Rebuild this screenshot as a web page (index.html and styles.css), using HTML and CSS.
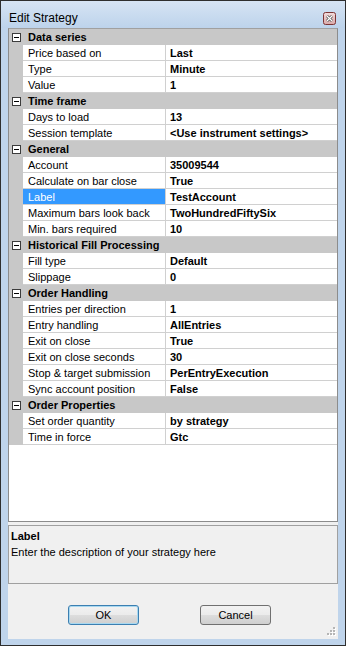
FILE: index.html
```html
<!DOCTYPE html>
<html lang="en">
<head>
    <meta charset="UTF-8">
    <title>Edit Strategy</title>
    <link rel="stylesheet" href="styles.css">
</head>
<body>
    <div class="window">
        <div class="titlebar">
            <span class="title">Edit Strategy</span>
            <svg class="close" width="13" height="13" viewBox="0 0 13 13">
                <defs>
                    <linearGradient id="cg" x1="0" y1="0" x2="0" y2="1">
                        <stop offset="0" stop-color="#f3dcdc"/>
                        <stop offset="1" stop-color="#d9a8a8"/>
                    </linearGradient>
                </defs>
                <rect x="0.5" y="0.5" width="12" height="12" rx="2" fill="url(#cg)" stroke="#7d3434"/>
                <path d="M4 4 L9 9 M9 4 L4 9" stroke="#4a4a4a" stroke-width="2.6"/>
                <path d="M4 4 L9 9 M9 4 L4 9" stroke="#ffffff" stroke-width="1.2"/>
            </svg>
        </div>

        <div class="client">
            <div class="grid">
                <div class="row cat"><span class="margin"><i class="exp"></i></span><span class="cat-name">Data series</span></div>
                <div class="row"><span class="margin"></span><span class="name">Price based on</span><span class="value">Last</span></div>
                <div class="row"><span class="margin"></span><span class="name">Type</span><span class="value">Minute</span></div>
                <div class="row"><span class="margin"></span><span class="name">Value</span><span class="value">1</span></div>

                <div class="row cat"><span class="margin"><i class="exp"></i></span><span class="cat-name">Time frame</span></div>
                <div class="row"><span class="margin"></span><span class="name">Days to load</span><span class="value">13</span></div>
                <div class="row"><span class="margin"></span><span class="name">Session template</span><span class="value">&lt;Use instrument settings&gt;</span></div>

                <div class="row cat"><span class="margin"><i class="exp"></i></span><span class="cat-name">General</span></div>
                <div class="row"><span class="margin"></span><span class="name">Account</span><span class="value">35009544</span></div>
                <div class="row"><span class="margin"></span><span class="name">Calculate on bar close</span><span class="value">True</span></div>
                <div class="row selected"><span class="margin"></span><span class="name">Label</span><span class="value">TestAccount</span></div>
                <div class="row"><span class="margin"></span><span class="name">Maximum bars look back</span><span class="value">TwoHundredFiftySix</span></div>
                <div class="row"><span class="margin"></span><span class="name">Min. bars required</span><span class="value">10</span></div>

                <div class="row cat"><span class="margin"><i class="exp"></i></span><span class="cat-name">Historical Fill Processing</span></div>
                <div class="row"><span class="margin"></span><span class="name">Fill type</span><span class="value">Default</span></div>
                <div class="row"><span class="margin"></span><span class="name">Slippage</span><span class="value">0</span></div>

                <div class="row cat"><span class="margin"><i class="exp"></i></span><span class="cat-name">Order Handling</span></div>
                <div class="row"><span class="margin"></span><span class="name">Entries per direction</span><span class="value">1</span></div>
                <div class="row"><span class="margin"></span><span class="name">Entry handling</span><span class="value">AllEntries</span></div>
                <div class="row"><span class="margin"></span><span class="name">Exit on close</span><span class="value">True</span></div>
                <div class="row"><span class="margin"></span><span class="name">Exit on close seconds</span><span class="value">30</span></div>
                <div class="row"><span class="margin"></span><span class="name">Stop &amp; target submission</span><span class="value">PerEntryExecution</span></div>
                <div class="row"><span class="margin"></span><span class="name">Sync account position</span><span class="value">False</span></div>

                <div class="row cat"><span class="margin"><i class="exp"></i></span><span class="cat-name">Order Properties</span></div>
                <div class="row"><span class="margin"></span><span class="name">Set order quantity</span><span class="value">by strategy</span></div>
                <div class="row"><span class="margin"></span><span class="name">Time in force</span><span class="value">Gtc</span></div>
            </div>

            <div class="help">
                <div class="help-title">Label</div>
                <div class="help-text">Enter the description of your strategy here</div>
            </div>

            <div class="buttons">
                <button class="btn default">OK</button>
                <button class="btn">Cancel</button>
            </div>

            <svg class="grip" width="12" height="12" viewBox="0 0 12 12">
                <g fill="#ffffff">
                    <rect x="10" y="3" width="2" height="2"/>
                    <rect x="7" y="6" width="2" height="2"/><rect x="10" y="6" width="2" height="2"/>
                    <rect x="4" y="9" width="2" height="2"/><rect x="7" y="9" width="2" height="2"/><rect x="10" y="9" width="2" height="2"/>
                </g>
                <g fill="#b5b5b5">
                    <rect x="9" y="2" width="2" height="2"/>
                    <rect x="6" y="5" width="2" height="2"/><rect x="9" y="5" width="2" height="2"/>
                    <rect x="3" y="8" width="2" height="2"/><rect x="6" y="8" width="2" height="2"/><rect x="9" y="8" width="2" height="2"/>
                </g>
            </svg>
        </div>
    </div>
</body>
</html>
```

FILE: styles.css
```css
:root {
    --frame: #bfd4eb;
    --cat-bg: #c8c8c8;
    --grid-line: #d0d0d0;
    --dialog-bg: #f0f0f0;
}

body {
    margin: 0;
    background: #ffffff;
    font-family: 'Liberation Sans', Arial, sans-serif;
    font-size: 11px;
    color: #000;
}

.window {
    width: 346px;
    height: 646px;
    box-sizing: border-box;
    border: 1px solid #2e2e2e;
    background: var(--frame);
    padding: 0 7px 6px 7px;
    display: flex;
    flex-direction: column;
}

.titlebar {
    height: 27px;
    margin: 0 -7px;
    padding: 0 9px 0 8px;
    background: linear-gradient(#d6e4f4, #bdd3eb);
    display: flex;
    align-items: center;
    justify-content: space-between;
}

.title {
    font-size: 12px;
    padding-top: 7px;
    color: #000;
}

.close {
    display: block;
    margin-top: 7px;
}

.client {
    flex: 1;
    background: var(--dialog-bg);
    display: flex;
    flex-direction: column;
    position: relative;
}

.grid {
    height: 494px;
    box-sizing: border-box;
    border: 1px solid #8c8c8c;
    border-top-color: #a0a0a0;
    background: #ffffff;
}

.row {
    display: grid;
    grid-template-columns: 14px 143px 1fr;
    height: 16px;
    line-height: 14px;
}

.row .margin {
    background: var(--cat-bg);
    position: relative;
}

.row .name {
    padding: 1px 0 0 5px;
    border-right: 1px solid var(--grid-line);
    border-bottom: 1px solid var(--grid-line);
    white-space: nowrap;
    overflow: hidden;
}

.row .value {
    padding: 1px 0 0 4px;
    font-weight: bold;
    border-bottom: 1px solid var(--grid-line);
    white-space: nowrap;
    overflow: hidden;
}

.row.cat {
    background: var(--cat-bg);
    line-height: 17px;
}

.cat-name {
    grid-column: 2 / 4;
    padding-left: 5px;
    font-weight: bold;
}

.row.selected .name {
    background: #3399ff;
    color: #ffffff;
}

.exp {
    position: absolute;
    left: 3px;
    top: 4px;
    width: 7px;
    height: 7px;
    border: 1px solid #3c3c3c;
    background: #ffffff;
}

.exp::after {
    content: "";
    position: absolute;
    left: 1px;
    top: 3px;
    width: 5px;
    height: 1px;
    background: #000;
}

.help {
    margin-top: 3px;
    height: 59px;
    box-sizing: border-box;
    border: 1px solid #a0a0a0;
    padding: 2px 2px 0 2px;
    line-height: 16px;
}

.help-title {
    font-weight: bold;
}

.buttons {
    display: flex;
    padding-top: 21px;
    padding-left: 60px;
    gap: 61px;
}

.btn {
    width: 71px;
    height: 20px;
    box-sizing: border-box;
    border: 1px solid #707070;
    border-radius: 3px;
    background: linear-gradient(#f2f2f2 0%, #ebebeb 50%, #dddddd 51%, #cfcfcf 100%);
    font-family: 'Liberation Sans', Arial, sans-serif;
    font-size: 11px;
    padding: 0;
    color: #000;
}

.btn.default {
    border-color: #3c7fb1;
    box-shadow: inset 0 0 0 1px #a8d8f0;
}

.grip {
    position: absolute;
    right: 2px;
    bottom: 2px;
}
```
